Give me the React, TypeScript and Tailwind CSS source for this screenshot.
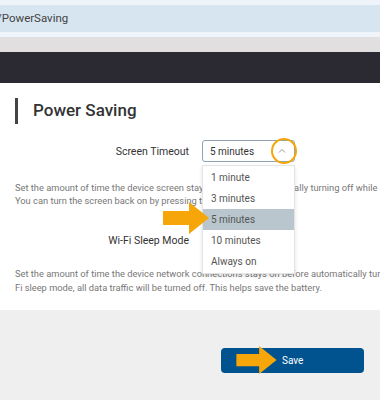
import React from 'react'

const options = ['1 minute', '3 minutes', '5 minutes', '10 minutes', 'Always on']

function OrangeArrow({ className }: { className?: string }) {
    return (
        <svg className={className} viewBox="0 0 46 32" width="46" height="32">
            <path d="M0 9 H26 V0 L46 16 L26 32 V23 H0 Z" fill="#f6a609" />
        </svg>
    )
}

function SettingRow({ label, children }: { label: string; children?: React.ReactNode }) {
    return (
        <div className="flex items-center h-[22px]">
            <div className="w-[189px] text-right text-[10.5px] text-[#333] pt-[2px]">{label}</div>
            <div className="ml-[13px] relative">{children}</div>
        </div>
    )
}

export default function App() {
    return (
        <div className="relative w-[380px] h-[400px] overflow-hidden bg-[#efefef] font-['Roboto',sans-serif]">
            <div className="h-[5px] bg-[#eef4fa]" />
            <div className="h-[27px] bg-[#d7e5f0] flex items-center">
                <span className="ml-[-3px] text-[11.5px] text-[#444]">/PowerSaving</span>
            </div>
            <div className="h-[5px] bg-[#eef4fa]" />
            <div className="h-[15px] bg-[#e1dfe0]" />
            <div className="h-[31px] bg-[#2b2a33]" />

            <div className="bg-white h-[227px] pt-[15px]">
                <div className="flex items-center h-[26px] ml-[15px]">
                    <div className="w-[3px] h-[26px] bg-[#444]" />
                    <h1 className="ml-[15px] text-[17px] font-medium text-[#333]">Power Saving</h1>
                </div>

                <div className="mt-[16px]">
                    <SettingRow label="Screen Timeout">
                        <div className="w-[93px] h-[22px] border border-[#8fa3b5] rounded-[3px] flex items-center justify-between pl-[7px] pr-[7px]">
                            <span className="text-[10px] text-[#333]">5 minutes</span>
                            <svg width="10" height="10" viewBox="0 0 10 10">
                                <path d="M2 6.5 L5 3.5 L8 6.5" fill="none" stroke="#999" strokeWidth="1" />
                            </svg>
                        </div>
                    </SettingRow>
                </div>

                <div className="mt-[19px] ml-[15px] text-[9.3px] leading-[13px] text-[#777] whitespace-nowrap">
                    <p>Set the amount of time the device screen stays on before automatically turning off while idle.</p>
                    <p>You can turn the screen back on by pressing the power button.</p>
                </div>

                <div className="mt-[22px]">
                    <SettingRow label="Wi-Fi Sleep Mode" />
                </div>

                <div className="mt-[16px] ml-[15px] text-[9.3px] leading-[14px] text-[#777] whitespace-nowrap">
                    <p>Set the amount of time the device network connections stays on before automatically turning off. In Wi-</p>
                    <p>Fi sleep mode, all data traffic will be turned off. This helps save the battery.</p>
                </div>
            </div>

            <div className="flex justify-end pr-[16px] pt-[38px]">
                <button
                    type="button"
                    className="w-[143px] h-[25px] rounded-[4px] bg-[#00538f] text-white text-[10px] flex items-center pl-[61px]"
                >
                    Save
                </button>
            </div>

            {/* dropdown menu */}
            <div className="absolute left-[202px] top-[165px] w-[93px] bg-white border border-[#e4e4e4] shadow-[0_2px_4px_rgba(0,0,0,0.12)] py-[1px]">
                {options.map((o) => (
                    <div
                        key={o}
                        className={`h-[21px] flex items-center pl-[8px] text-[10px] text-[#555] ${o === '5 minutes' ? 'bg-[#b9c6cd] text-[#333]' : ''}`}
                    >
                        {o}
                    </div>
                ))}
            </div>

            {/* annotation circle */}
            <div className="absolute left-[271px] top-[138px] w-[26px] h-[26px] rounded-full border-[2.5px] border-[#f6a609]" />

            <OrangeArrow className="absolute left-[163px] top-[202px]" />
            <OrangeArrow className="absolute left-[234px] top-[346px] w-[45px] h-[28px]" />
        </div>
    )
}
